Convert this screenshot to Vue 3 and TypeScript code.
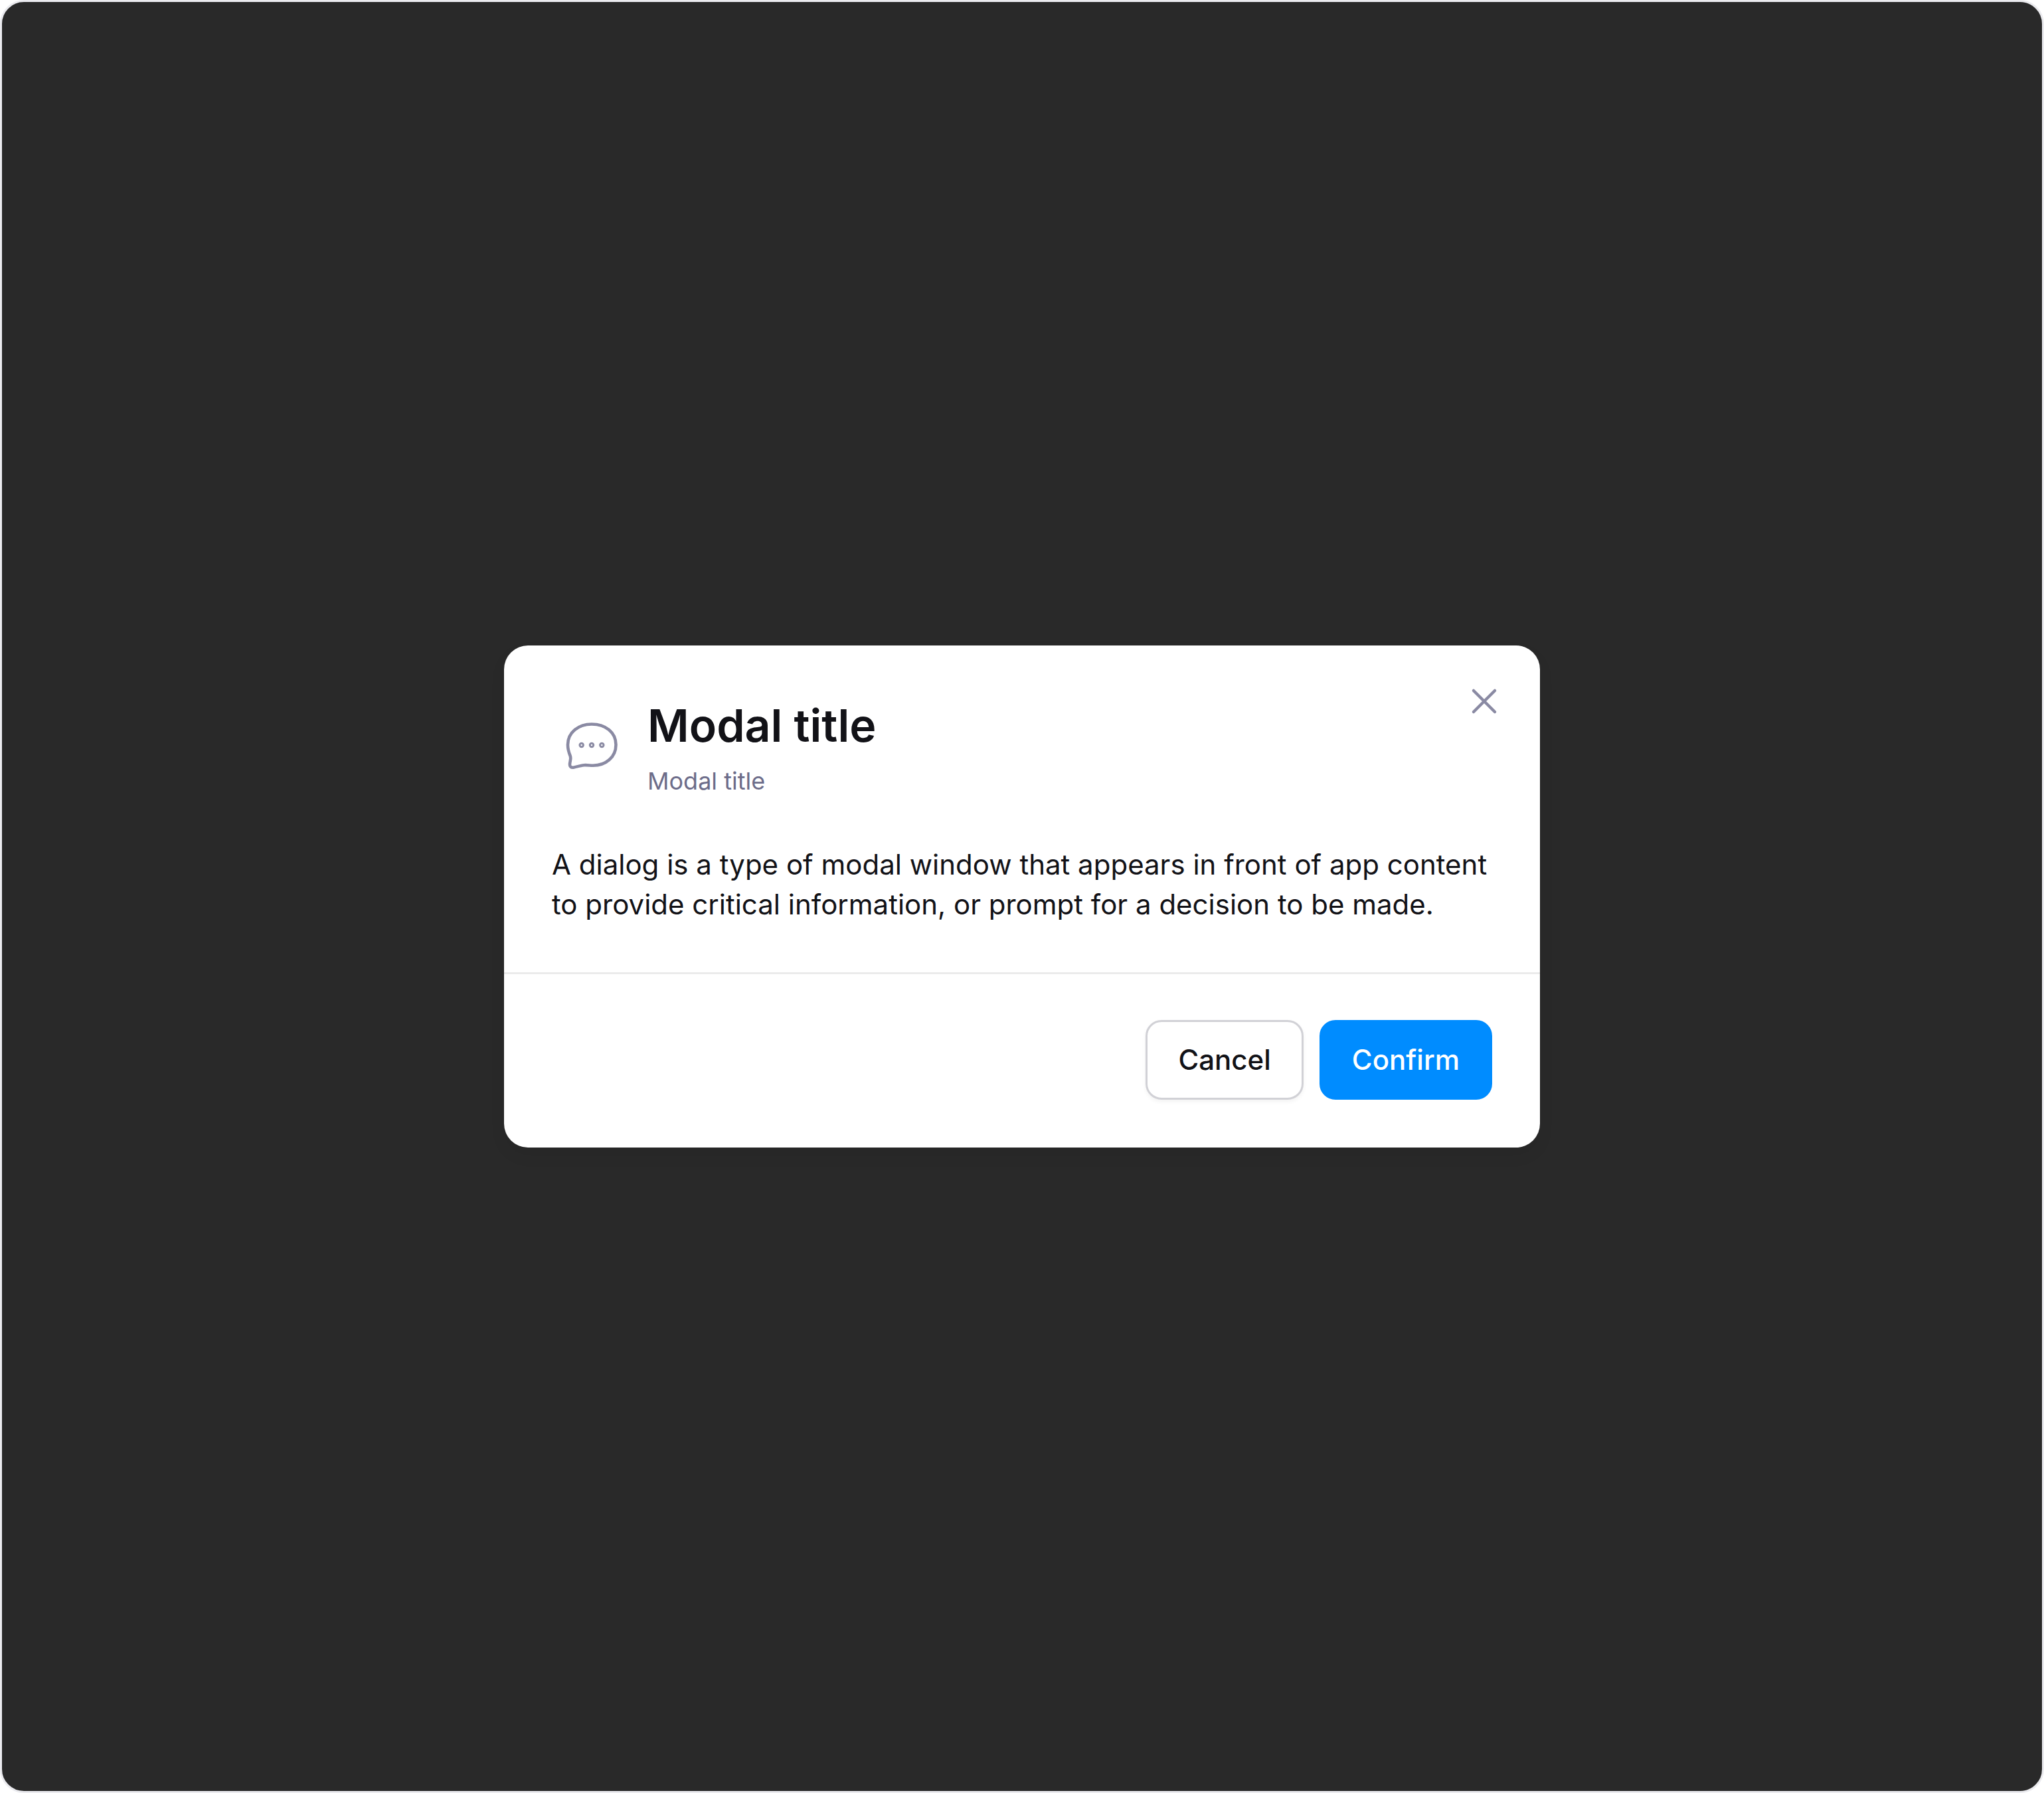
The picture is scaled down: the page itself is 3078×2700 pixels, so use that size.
<script setup lang="ts">
import { ref } from 'vue'

interface DialogAction {
  id: string
  label: string
  variant: 'secondary' | 'primary'
}

const title = ref('Modal title')
const subtitle = ref('Modal title')
const description = ref(
  'A dialog is a type of modal window that appears in front of app content to provide critical information, or prompt for a decision to be made.',
)
const actions: DialogAction[] = [
  { id: 'cancel', label: 'Cancel', variant: 'secondary' },
  { id: 'confirm', label: 'Confirm', variant: 'primary' },
]
</script>

<template>
  <main class="backdrop">
    <section class="modal" role="dialog" aria-modal="true" aria-labelledby="modal-title" aria-describedby="modal-text">
      <div class="content">
        <header class="header">
          <span class="badge">
            <svg viewBox="0 0 96 96" fill="none" stroke="currentColor" aria-hidden="true">
              <path
                d="M48 16.5C69 16.5 84.5 29 84.5 47.5C84.5 66 69.5 78.8 50 78.8C45.5 78.8 41 77.7 36.5 78.2C31 78.8 26 80.5 20.5 81.7C17 82.3 14.8 80.2 15 77C15.2 72.5 17.3 68.5 15.8 64.5C13.5 59 12 54 12 47.5C12 29 28 16.5 48 16.5Z"
                stroke-width="4.6"
                stroke-linejoin="round"
              />
              <g stroke-width="3">
                <circle cx="32.7" cy="48" r="2.7" />
                <circle cx="48" cy="48" r="2.7" />
                <circle cx="63.3" cy="48" r="2.7" />
              </g>
            </svg>
          </span>
          <div class="headings">
            <h1 id="modal-title" class="title">{{ title }}</h1>
            <p class="subtitle">{{ subtitle }}</p>
          </div>
        </header>
        <p id="modal-text" class="description">{{ description }}</p>
      </div>
      <footer class="footer">
        <button v-for="action in actions" :key="action.id" type="button" class="button" :class="action.variant">
          {{ action.label }}
        </button>
      </footer>
      <button type="button" class="close" aria-label="Close">
        <svg viewBox="0 0 72 72" fill="none" stroke="currentColor" stroke-width="4.5" stroke-linecap="round" aria-hidden="true">
          <path d="M20 20L52 52M52 20L20 52" />
        </svg>
      </button>
    </section>
  </main>
</template>

<style>
body {
  margin: 0;
  background: #ffffff;
}
</style>

<style scoped>
.backdrop {
  box-sizing: border-box;
  min-height: 100vh;
  display: flex;
  align-items: center;
  justify-content: center;
  border: 3px solid #ebebef;
  border-radius: 36px;
  background: #292929;
  font-family: Inter, 'Liberation Sans', sans-serif;
  color: #121217;
}

.modal {
  position: relative;
  width: 100%;
  max-width: 1560px;
  border-radius: 36px;
  background: #ffffff;
  box-shadow: 0 12px 24px rgba(18, 18, 23, 0.06);
}

.content {
  display: flex;
  flex-direction: column;
  gap: 72px;
  padding: 72px;
}

.header {
  display: flex;
  align-items: center;
  gap: 24px;
}

.badge {
  display: flex;
  align-items: center;
  justify-content: center;
  width: 120px;
  height: 120px;
  color: #8a8aa3;
}

.badge svg {
  width: 96px;
  height: 96px;
}

.headings {
  display: flex;
  flex-direction: column;
  gap: 12px;
}

.title {
  margin: 0;
  font-size: 68px;
  line-height: 96px;
  font-weight: 600;
}

.subtitle {
  margin: 0;
  font-size: 36px;
  line-height: 48px;
  color: #6c6c89;
}

.description {
  margin: 0;
  font-size: 42px;
  line-height: 60px;
}

.footer {
  display: flex;
  justify-content: flex-end;
  gap: 24px;
  padding: 72px;
  box-shadow: inset 0 3px 0 #ebebeb;
}

.button {
  box-sizing: border-box;
  height: 120px;
  padding: 0 46px;
  border: 3px solid transparent;
  border-radius: 24px;
  font: inherit;
  font-size: 42px;
  line-height: 60px;
  font-weight: 500;
  cursor: pointer;
}

.secondary {
  border-color: #d1d1d6;
  background: #ffffff;
  color: #121217;
  box-shadow: 0 3px 6px rgba(18, 18, 23, 0.05);
}

.primary {
  border-color: #008cff;
  background: #008cff;
  color: #ffffff;
}

.close {
  position: absolute;
  top: 48px;
  right: 48px;
  width: 72px;
  height: 72px;
  padding: 0;
  border: 0;
  background: none;
  color: #8a8aa3;
  cursor: pointer;
}

.close svg {
  display: block;
  width: 72px;
  height: 72px;
}
</style>
